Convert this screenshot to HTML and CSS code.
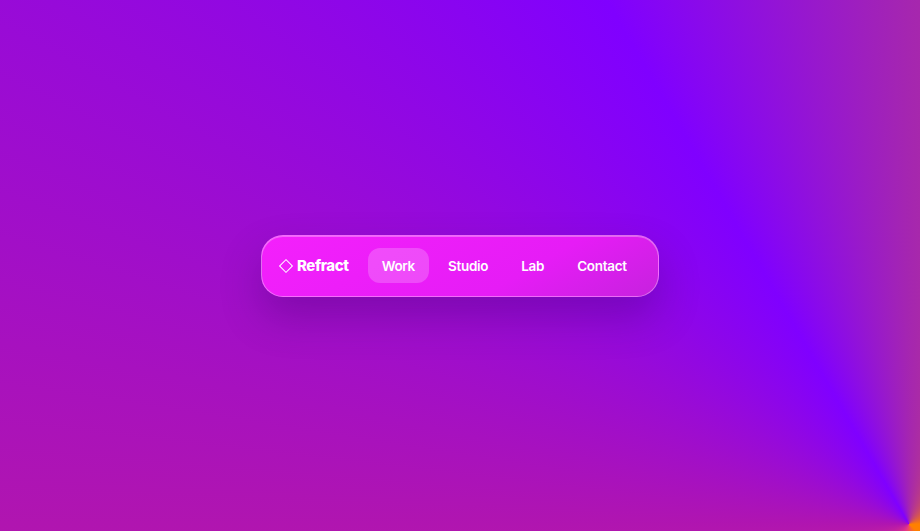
FILE: index.html
```html
<!DOCTYPE html>
<html lang="en">
<head>
    <meta charset="UTF-8">
    <title>Refract</title>
    <link rel="stylesheet" href="styles.css">
</head>
<body>
    <nav class="glass-nav">
        <a href="#" class="brand">
            <span class="brand-mark"></span>
            Refract
        </a>
        <a href="#" class="nav-link active">Work</a>
        <a href="#" class="nav-link">Studio</a>
        <a href="#" class="nav-link">Lab</a>
        <a href="#" class="nav-link">Contact</a>
    </nav>
</body>
</html>
```

FILE: styles.css
```css
body {
    font-family: Inter, 'Liberation Sans', sans-serif;
    background: conic-gradient(from 0deg at 98.8% 98.7%, #a526b0 0deg, #ff8000 90deg, #ff8000 130deg, #e83a80 200deg, #b015b0 270deg, #8000ff 330deg, #a526b0 360deg);
    display: flex;
    justify-content: center;
    align-items: center;
    height: 100vh;
    margin: 0;
}

.glass-nav {
    display: flex;
    align-items: center;
    gap: 5px;
    box-sizing: border-box;
    width: 398px;
    height: 62px;
    padding: 0 19px;
    border: 1px solid rgba(255, 255, 255, 0.35);
    border-radius: 22px;
    background: linear-gradient(150deg, #f420fc 0%, #e61cf6 65%, #c622de 100%);
    box-shadow: 0 20px 40px rgba(60, 0, 100, 0.3), inset 0 1px 0 rgba(255, 255, 255, 0.3);
}

.brand {
    display: flex;
    align-items: center;
    gap: 6px;
    margin-right: 14px;
    color: white;
    font-size: 15px;
    font-weight: 800;
    letter-spacing: -0.4px;
    text-decoration: none;
}

.brand-mark {
    box-sizing: border-box;
    width: 10px;
    height: 10px;
    border: 1px solid white;
    transform: rotate(45deg);
}

.nav-link {
    padding: 11px 14px 9px;
    border-radius: 12px;
    color: white;
    font-size: 13.5px;
    font-weight: 600;
    letter-spacing: -0.3px;
    line-height: 15px;
    text-decoration: none;
}

.nav-link.active {
    background-color: rgba(255, 255, 255, 0.2);
}
```
